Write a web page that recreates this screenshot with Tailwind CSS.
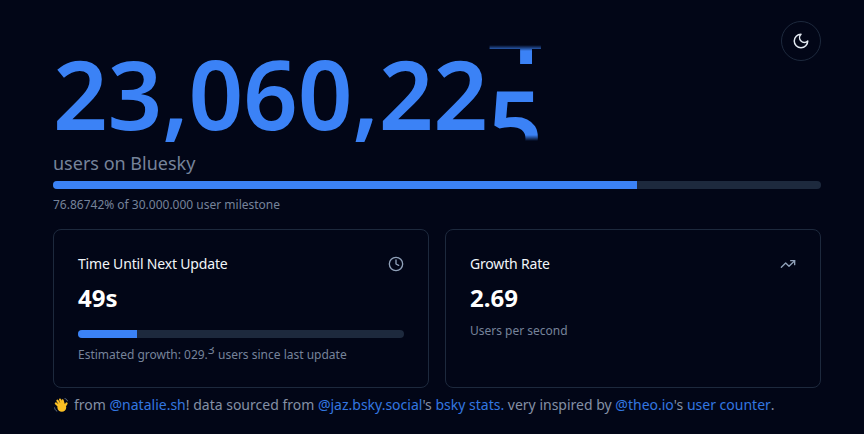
<!DOCTYPE html>
<html lang="en">
<head>
  <meta charset="UTF-8" />
  <title>Bluesky user counter</title>
  <script src="https://cdn.jsdelivr.net/npm/@tailwindcss/browser@4"></script>
</head>
<body class="h-[434px] overflow-hidden bg-[#020617] font-['Noto_Sans',sans-serif] text-white">
  <!-- theme toggle -->
  <button class="absolute top-[21px] left-[781px] flex h-10 w-10 items-center justify-center rounded-full border border-slate-800 text-slate-200" aria-label="Toggle theme">
    <svg class="h-[18px] w-[18px]" viewBox="0 0 24 24" fill="none" stroke="currentColor" stroke-width="2" stroke-linecap="round" stroke-linejoin="round"><path d="M12 3a6 6 0 0 0 9 9 9 9 0 1 1-9-9Z"/></svg>
  </button>

  <main class="ml-[53px] w-[768px] pt-[45px]">
    <!-- counter -->
    <h1 class="flex h-24 text-8xl leading-none font-semibold tracking-[-0.35px] text-[#3b82f6]">
      <span>23,060,22</span>
      <span class="relative inline-block h-24 w-[55px] overflow-hidden [mask-image:linear-gradient(to_bottom,transparent,black_6px,black_90px,transparent)]">
        <span class="absolute top-[-66px] left-0">4</span>
        <span class="absolute top-[30px] left-0">5</span>
      </span>
    </h1>
    <p class="mt-2 text-lg leading-7 text-[#76839a]">users on Bluesky</p>
    <div class="mt-1 h-2 w-full overflow-hidden rounded-full bg-slate-800">
      <div class="h-full w-[76.04%] bg-[#3b82f6]"></div>
    </div>
    <p class="mt-2 text-xs leading-4 text-[#76839a]">76.86742% of 30.000.000 user milestone</p>

    <!-- stat cards -->
    <div class="mt-4 grid h-[157px] grid-cols-2 gap-4">
      <section class="rounded-lg border border-slate-800 p-6">
        <div class="flex items-center justify-between">
          <h2 class="text-sm leading-5 tracking-[-0.18px] text-slate-100">Time Until Next Update</h2>
          <svg class="h-4 w-4 text-slate-400" viewBox="0 0 24 24" fill="none" stroke="currentColor" stroke-width="2" stroke-linecap="round" stroke-linejoin="round"><circle cx="12" cy="12" r="10"/><polyline points="12 6 12 12 16 14"/></svg>
        </div>
        <p class="mt-2 text-2xl leading-8 font-bold">49s</p>
        <div class="mt-4 h-2 w-full overflow-hidden rounded-full bg-slate-800">
          <div class="h-full w-[18.1%] bg-[#3b82f6]"></div>
        </div>
        <p class="mt-[9px] text-xs leading-4 text-[#76839a]">Estimated growth: 029.<span class="relative inline-block h-4 w-[7px] overflow-hidden align-bottom"><span class="absolute top-[-5px] left-0">3</span></span> users since last update</p>
      </section>
      <section class="rounded-lg border border-slate-800 p-6">
        <div class="flex items-center justify-between">
          <h2 class="text-sm leading-5 tracking-[-0.18px] text-slate-100">Growth Rate</h2>
          <svg class="h-4 w-4 text-slate-400" viewBox="0 0 24 24" fill="none" stroke="currentColor" stroke-width="2" stroke-linecap="round" stroke-linejoin="round"><polyline points="22 7 13.5 15.5 8.5 10.5 2 17"/><polyline points="16 7 22 7 22 13"/></svg>
        </div>
        <p class="mt-2 text-2xl leading-8 font-bold">2.69</p>
        <p class="mt-[9px] text-xs leading-4 text-[#76839a]">Users per second</p>
      </section>
    </div>

    <!-- credits -->
    <p class="mt-[9px] flex items-center text-sm leading-5 whitespace-pre text-[#8490a5]">
      <svg class="mr-[5px] h-4 w-4" viewBox="0 0 20 20"><path d="M2 13.500c.3 2 1.200 3.300 2.800 4.200M15 2c1.500.3 2.500 1.200 3 2.800" fill="none" stroke="#64748b" stroke-width="1.200" stroke-linecap="round"/><circle cx="11" cy="13" r="5.500" fill="#fbbf24"/><path d="M8 12 3.500 8M9 10 5.500 4.500M11 9 8.800 3.200M13.500 9 12 4M14.500 12l2.500-4" fill="none" stroke="#fbbf24" stroke-width="2.600" stroke-linecap="round"/></svg><span>from </span><a class="text-[#3377e0]">@natalie.sh</a><span>! data sourced from </span><a class="text-[#3377e0]">@jaz.bsky.social</a><span>'s </span><a class="text-[#3377e0]">bsky stats.</a><span> very inspired by </span><a class="text-[#3377e0]">@theo.io</a><span>'s </span><a class="text-[#3377e0]">user counter</a><span>.</span>
    </p>
  </main>
</body>
</html>
